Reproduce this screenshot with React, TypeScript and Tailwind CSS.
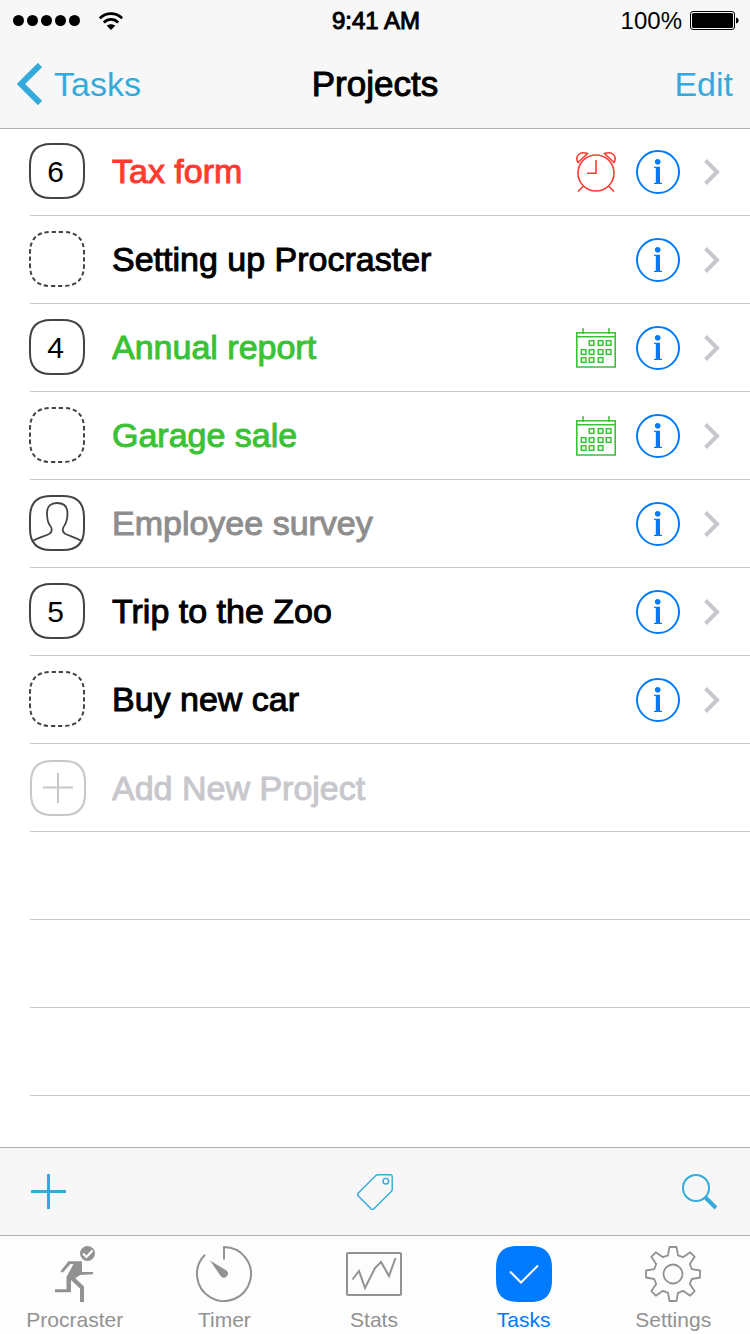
import React from "react";

type BadgeKind = "count" | "empty" | "person";
type Tone = "red" | "green" | "gray" | "black";

interface Project {
  name: string;
  badge: BadgeKind;
  count?: number;
  tone: Tone;
  mark?: "alarm" | "calendar";
}

const projects: Project[] = [
  { name: "Tax form", badge: "count", count: 6, tone: "red", mark: "alarm" },
  { name: "Setting up Procraster", badge: "empty", tone: "black" },
  { name: "Annual report", badge: "count", count: 4, tone: "green", mark: "calendar" },
  { name: "Garage sale", badge: "empty", tone: "green", mark: "calendar" },
  { name: "Employee survey", badge: "person", tone: "gray" },
  { name: "Trip to the Zoo", badge: "count", count: 5, tone: "black" },
  { name: "Buy new car", badge: "empty", tone: "black" },
];

const toneClass: Record<Tone, string> = {
  red: "text-[#ff3b30]",
  green: "text-[#3ac235]",
  gray: "text-[#8e8e8e]",
  black: "text-black",
};

const SQUIRCLE =
  "M22 1H34C48 1 55 8 55 22V34C55 48 48 55 34 55H22C8 55 1 48 1 34V22C1 8 8 1 22 1Z";

function Badge({ kind, count }: { kind: BadgeKind; count?: number }) {
  return (
    <span className="-ml-px mb-[2px] grid size-14 shrink-0 place-items-center text-black">
      <svg viewBox="0 0 56 56" className="col-start-1 row-start-1 size-14" fill="none" stroke="#444" strokeWidth="2" aria-hidden="true">
        {kind === "empty" ? (
          <path d={SQUIRCLE} pathLength={260} strokeDasharray="6 4" strokeDashoffset="-1" />
        ) : (
          <path d={SQUIRCLE} />
        )}
        {kind === "person" && (
          <path
            strokeWidth="1.8"
            d="M3.5 46C9 42.5 15 41.5 20 39C23.500 37 23.500 33.500 21 30.500C18 26.500 18 22 18 18C18 11 22 8 28 8S38.500 11 38.500 18C38.500 22 38 26.500 35.500 30.500C33 33.500 33 37 36.500 39C42 41.500 47 42.500 52.500 46"
          />
        )}
      </svg>
      {kind === "count" && (
        <span className="col-start-1 row-start-1 pr-[3px] pt-[2px] text-[30px] leading-8">{count}</span>
      )}
    </span>
  );
}

function AlarmIcon() {
  return (
    <svg viewBox="0 0 40 40" className="size-10" fill="none" stroke="#ff3b30" strokeWidth="1.6" role="img" aria-label="Due">
      <circle cx="20" cy="21" r="18" />
      <path d="M20 8v13.300H11M7.500 34L2 39.500M32.500 34L38 39.500" />
      <path d="M2 10.500L11.500 1.500C10 .9 8.500.8 7 .8 3.500.8.8 3.500.8 6.500.8 8 1.200 9.500 2 10.500ZM38 10.500L28.500 1.500C30 .9 31.500.8 33 .8 36.500.8 39.200 3.500 39.200 6.500 39.200 8 38.800 9.500 38 10.500Z" />
    </svg>
  );
}

const dayCells = [
  [13, 12], [22, 12], [30, 12],
  [5, 21], [13, 21], [22, 21], [30, 21],
  [5, 29], [13, 29], [22, 29],
];

function CalendarIcon() {
  return (
    <svg viewBox="0 0 40 40" className="size-10" fill="none" stroke="#3ac235" role="img" aria-label="Scheduled">
      <path d="M0 4.800H40M0 8.800H40M7 0V6M33 0V6" strokeWidth="1.500" />
      <path d="M.8 4.500V39H39.200V4.500" strokeWidth="1.600" />
      {dayCells.map(([x, y]) => (
        <rect key={`${x}-${y}`} x={x + 0.3} y={y + 0.7} width="4.600" height="4.600" strokeWidth="1.500" />
      ))}
    </svg>
  );
}

function InfoIcon() {
  return (
    <svg viewBox="0 0 44 44" className="size-11" fill="#007aff" aria-hidden="true">
      <circle cx="22" cy="22" r="21" fill="none" stroke="#007aff" strokeWidth="2" />
      <circle cx="21.700" cy="11.700" r="2.800" />
      <path d="M18 16.800H24V32.800H26V34H18V32.800H19.800V18H18Z" />
    </svg>
  );
}

function ProjectRow({ project }: { project: Project }) {
  return (
    <li className="ml-[30px] flex h-22 items-center border-b border-[#c8c7cc] pt-px pr-[30px]">
      <Badge kind={project.badge} count={project.count} />
      <span
        className={`mb-[2px] ml-[27px] min-w-0 flex-1 truncate text-[34px] leading-10 [-webkit-text-stroke:1px] ${toneClass[project.tone]}`}
      >
        {project.name}
      </span>
      {project.mark === "alarm" && <AlarmIcon />}
      {project.mark === "calendar" && <CalendarIcon />}
      <button type="button" aria-label={`Details of ${project.name}`} className="ml-5">
        <InfoIcon />
      </button>
      <svg viewBox="0 0 16 26" className="ml-6 h-[26px] w-4" fill="none" stroke="#c7c7cc" strokeWidth="4" aria-hidden="true">
        <path d="M1.500 1.500L13 13L1.500 24.500" />
      </svg>
    </li>
  );
}

function RunnerIcon() {
  return (
    <svg viewBox="0 0 56 56" className="size-14" fill="#929292" aria-hidden="true">
      <circle cx="40.500" cy="7.500" r="7.500" />
      <path d="M36 7.500L39.500 11L45.500 4.500" fill="none" stroke="#fff" strokeWidth="2.200" />
      <path d="M21.500 15.300H35V26L46 26V28.300L33 29L28.300 32.300L37 40.500V56H33V42.500L24 34V46.300H8V43.300H19.500V31L26.500 18H23.500L15.500 26.800L13.500 25.300Z" />
    </svg>
  );
}

function TimerIcon() {
  return (
    <svg viewBox="0 0 56 56" className="size-14" fill="none" stroke="#929292" strokeWidth="2" aria-hidden="true">
      <path d="M28 13.500V1A27 27 0 1 1 9 8.800" />
      <path d="M14 14.500L30.500 24.500A4 4 0 1 1 25 30.500Z" fill="#929292" stroke="none" />
    </svg>
  );
}

function StatsIcon() {
  return (
    <svg viewBox="0 0 56 56" className="size-14" fill="none" stroke="#929292" strokeWidth="2" aria-hidden="true">
      <rect x="1" y="7" width="54" height="42" rx="1" />
      <path d="M6.500 33.500L13 25L19 42L29 22L35 16L43 30L49.500 12" />
    </svg>
  );
}

function TasksIcon() {
  return (
    <svg viewBox="0 0 56 56" className="size-14" aria-hidden="true">
      <path
        d="M22 0H34C49 0 56 7 56 22V34C56 49 49 56 34 56H22C7 56 0 49 0 34V22C0 7 7 0 22 0Z"
        fill="#007aff"
      />
      <path d="M14 25.500L25 36.500L42 19.500" fill="none" stroke="#fff" strokeWidth="2" />
    </svg>
  );
}

function GearIcon() {
  return (
    <svg viewBox="0 0 56 56" className="size-14" fill="none" stroke="#929292" strokeWidth="1.800" aria-hidden="true">
      <circle cx="28" cy="28" r="9.500" />
      <path
        strokeLinejoin="round"
        d="M24.500 1H31.500L33 9.300L38 11.200L45.200 6.300L49.700 10.800L44.800 18L46.800 23.200L55 24.500V31.500L46.800 33L44.800 38L49.700 45.200L45.200 49.700L38 44.800L33 46.800L31.500 55H24.500L23 46.800L18 44.800L10.800 49.700L6.300 45.200L11.200 38L9.200 33L1 31.500V24.500L9.200 23.200L11.200 18L6.300 10.800L10.800 6.300L18 11.200L23 9.300Z"
      />
    </svg>
  );
}

const tabs = [
  { label: "Procraster", Icon: RunnerIcon, active: false },
  { label: "Timer", Icon: TimerIcon, active: false },
  { label: "Stats", Icon: StatsIcon, active: false },
  { label: "Tasks", Icon: TasksIcon, active: true },
  { label: "Settings", Icon: GearIcon, active: false },
];

function StatusBar() {
  return (
    <div className="grid h-10 grid-cols-3 items-center pt-px pr-[11px] pl-[13px] text-[24px] leading-7 text-black">
      <div className="flex items-center gap-[19px]">
        <svg viewBox="0 0 67 11" className="h-[11px] w-[67px]" aria-label="Signal strength" role="img">
          {[5.5, 19.5, 33.5, 47.5, 61.5].map((x) => (
            <circle key={x} cx={x} cy="5.500" r="5.500" />
          ))}
        </svg>
        <svg viewBox="0 0 24 18" className="h-[18px] w-6" fill="none" stroke="#000" strokeWidth="2.700" aria-label="Wi-Fi" role="img">
          <path d="M.8 6.300C7 .1 17 .1 23.200 6.300M4.800 10.400C9 6.400 15 6.400 19.200 10.400" />
          <path d="M12 18L7.800 13.800C10.200 11.800 13.800 11.800 16.200 13.800Z" fill="#000" stroke="none" />
        </svg>
      </div>
      <div className="text-center [-webkit-text-stroke:1px]">9:41 AM</div>
      <div className="flex items-center justify-end gap-2">
        <span>100%</span>
        <svg viewBox="0 0 49 19" className="h-[19px] w-[49px]" aria-label="Battery" role="img">
          <rect x=".5" y=".5" width="44" height="18" rx="2.500" fill="none" stroke="#000" />
          <rect x="2" y="2" width="41" height="15" rx="1.500" />
          <path d="M46 6.500C49.500 7 49.500 12 46 12.500Z" />
        </svg>
      </div>
    </div>
  );
}

export default function App() {
  return (
    <div className="flex min-h-screen flex-col bg-white font-['Liberation_Sans',Arial,sans-serif]">
      <header className="-mb-px border-b border-[#b2b2b2] bg-[#f7f7f7]">
        <StatusBar />
        <nav className="grid h-22 grid-cols-3 items-center px-[17px] text-[34px] leading-10 text-[#34aadc]">
          <a href="#tasks" className="flex items-center gap-3">
            <svg viewBox="0 0 25 42" className="h-[42px] w-[25px]" fill="none" stroke="currentColor" strokeWidth="6" aria-hidden="true">
              <path d="M23 2L4 21L23 40" />
            </svg>
            <span>Tasks</span>
          </a>
          <h1 className="text-center text-[35px] text-black [-webkit-text-stroke:1px]">Projects</h1>
          <button type="button" className="justify-self-end">Edit</button>
        </nav>
      </header>

      <main className="flex-1">
        <ul>
          {projects.map((p) => (
            <ProjectRow key={p.name} project={p} />
          ))}
          <li className="ml-[30px] h-22 border-b border-[#c8c7cc]">
            <button type="button" className="flex h-full w-full items-center pt-px text-left text-[#c7c7cc]">
              <svg viewBox="0 0 56 56" className="size-14" fill="none" stroke="currentColor" strokeWidth="2" aria-hidden="true">
                <path d={SQUIRCLE} />
                <path d="M13 27.500H43M28 13V43" />
              </svg>
              <span className="ml-[26px] text-[34px] leading-10 [-webkit-text-stroke:1px]">Add New Project</span>
            </button>
          </li>
          {[0, 1, 2].map((i) => (
            <li key={i} aria-hidden="true" className="ml-[30px] h-22 border-b border-[#c8c7cc]" />
          ))}
        </ul>
      </main>

      <footer>
        <div className="grid h-22 grid-cols-3 items-center border-t border-[#b2b2b2] bg-[#f7f7f7] pr-[32px] pl-[31px] text-[#34aadc]">
          <button type="button" aria-label="Add" className="justify-self-start">
            <svg viewBox="0 0 35 35" className="size-[35px]" stroke="currentColor" strokeWidth="3">
              <path d="M0 17.500H35M17.500 0V35" />
            </svg>
          </button>
          <button type="button" aria-label="Tags" className="justify-self-center">
            <svg viewBox="0 0 36 36" className="size-9" fill="none" stroke="currentColor" strokeWidth="1.400">
              <path d="M21 .8H33.500Q35.200.8 35.200 2.500V15.500Q35.200 16.500 34.500 17.200L17 34.700Q15.500 36.200 14 34.700L1.300 22Q-.2 20.500 1.300 19L18.800 1.500Q19.500.8 21 .8Z" />
              <circle cx="28.800" cy="7.200" r="2.800" />
            </svg>
          </button>
          <button type="button" aria-label="Search" className="justify-self-end">
            <svg viewBox="0 0 36 36" className="size-9" fill="none" stroke="currentColor">
              <circle cx="14" cy="14" r="13" strokeWidth="2" />
              <path d="M23.500 23.500L34 34" strokeWidth="4" />
            </svg>
          </button>
        </div>
        <nav className="grid h-[99px] grid-cols-5 border-t border-[#b2b2b2] bg-[#fdfdfd] pr-[2px]">
          {tabs.map(({ label, Icon, active }) => (
            <a
              key={label}
              href={`#${label.toLowerCase()}`}
              aria-current={active ? "page" : undefined}
              className={`flex flex-col items-center gap-[6px] pt-[10px] text-[21px] leading-6 ${active ? "text-[#007aff]" : "text-[#929292]"}`}
            >
              <Icon />
              <span>{label}</span>
            </a>
          ))}
        </nav>
      </footer>
    </div>
  );
}
